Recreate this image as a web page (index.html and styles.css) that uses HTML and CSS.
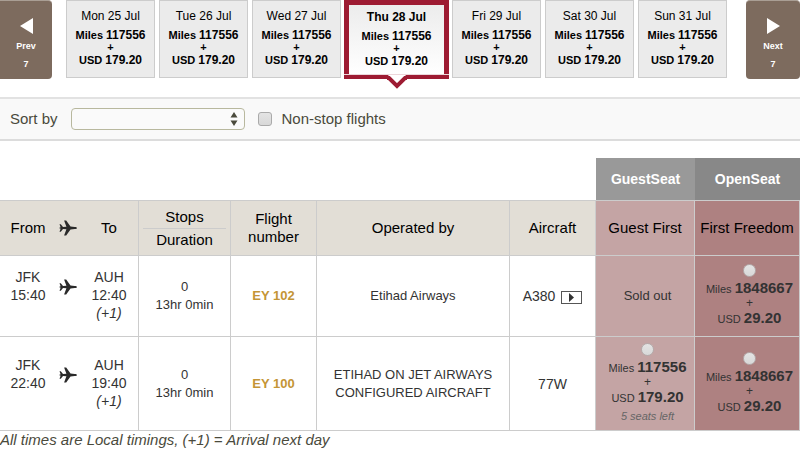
FILE: index.html
```html
<!DOCTYPE html>
<html lang="en">
<head>
<meta charset="utf-8">
<title>Select flights</title>
<meta name="viewport" content="width=device-width, initial-scale=1">
<link rel="stylesheet" href="styles.css">
</head>
<body>
<svg class="defs" aria-hidden="true">
  <symbol id="plane" viewBox="0 0 18 16">
    <path d="M18 8c0-.7-1-1-2.200-1.100L11.500 6.600 7.200.6H5.100L7.400 6.700 4 7 1.800 4.200H.5L1.600 7.300 0 8l1.600.7L.5 11.800h1.300L4 9l3.400.3L5.100 15.400h2.100l4.300-6 4.300-.3C17 9 18 8.700 18 8z"/>
  </symbol>
</svg>

<nav class="dates" aria-label="Departure date">
  <button type="button" class="pager pager-prev">
    <svg class="pager-arrow" viewBox="0 0 13 16" aria-hidden="true"><path d="M13 0v16L0 8z"/></svg>
    <span>Prev</span>
    <span>7</span>
  </button>
  <div class="days">
    <button type="button" class="day"><span class="day-name">Mon 25 Jul</span><span>Miles <b>117556</b></span><span class="plus">+</span><span>USD <b>179.20</b></span></button>
    <button type="button" class="day"><span class="day-name">Tue 26 Jul</span><span>Miles <b>117556</b></span><span class="plus">+</span><span>USD <b>179.20</b></span></button>
    <button type="button" class="day"><span class="day-name">Wed 27 Jul</span><span>Miles <b>117556</b></span><span class="plus">+</span><span>USD <b>179.20</b></span></button>
    <button type="button" class="day day-selected" aria-pressed="true"><span class="day-name">Thu 28 Jul</span><span>Miles <b>117556</b></span><span class="plus">+</span><span>USD <b>179.20</b></span>
      <svg class="pointer" viewBox="0 0 22 15" aria-hidden="true"><path class="pointer-fill" d="M2 0h18l-9 10z"/><path class="pointer-line" d="M1 3h2l8 8 8-8h2"/></svg>
    </button>
    <button type="button" class="day"><span class="day-name">Fri 29 Jul</span><span>Miles <b>117556</b></span><span class="plus">+</span><span>USD <b>179.20</b></span></button>
    <button type="button" class="day"><span class="day-name">Sat 30 Jul</span><span>Miles <b>117556</b></span><span class="plus">+</span><span>USD <b>179.20</b></span></button>
    <button type="button" class="day"><span class="day-name">Sun 31 Jul</span><span>Miles <b>117556</b></span><span class="plus">+</span><span>USD <b>179.20</b></span></button>
  </div>
  <button type="button" class="pager pager-next">
    <svg class="pager-arrow" viewBox="0 0 13 16" aria-hidden="true"><path d="M0 0v16l13-8z"/></svg>
    <span>Next</span>
    <span>7</span>
  </button>
</nav>

<form class="filters">
  <label for="sort">Sort by</label>
  <span class="select-box">
    <select id="sort"><option></option></select>
    <svg class="select-arrows" viewBox="0 0 8 14" aria-hidden="true"><path d="M4 0l3.500 5.500h-7zM4 14l3.500-5.500h-7z"/></svg>
  </span>
  <input type="checkbox" id="nonstop">
  <label for="nonstop">Non-stop flights</label>
</form>

<table class="flights">
  <colgroup>
    <col class="c-from"><col class="c-plane"><col class="c-to"><col class="c-stops"><col class="c-number"><col class="c-operator"><col class="c-aircraft"><col class="c-guest"><col class="c-open">
  </colgroup>
  <thead>
    <tr class="fare-groups">
      <td colspan="7"></td>
      <th class="group-guest">GuestSeat</th>
      <th class="group-open">OpenSeat</th>
    </tr>
    <tr class="headings">
      <th class="joined">From</th>
      <th class="joined"><svg class="plane" role="img" aria-label="to"><use href="#plane"/></svg></th>
      <th>To</th>
      <th class="stops"><div class="stops-top">Stops</div><div>Duration</div></th>
      <th>Flight number</th>
      <th>Operated by</th>
      <th>Aircraft</th>
      <th class="guest">Guest First</th>
      <th class="open">First Freedom</th>
    </tr>
  </thead>
  <tbody>
    <tr class="flight">
      <td class="joined place">JFK<br>15:40</td>
      <td class="joined place"><svg class="plane" role="img" aria-label="to"><use href="#plane"/></svg></td>
      <td class="place">AUH<br>12:40<br><i>(+1)</i></td>
      <td>0<br>13hr 0min</td>
      <td><a href="#ey102">EY 102</a></td>
      <td>Etihad Airways</td>
      <td class="aircraft">A380 <button type="button" class="video" aria-label="Play A380 video"><svg viewBox="0 0 19 11" aria-hidden="true"><path d="M7 1v9l5-4.500z"/></svg></button></td>
      <td class="guest sold-out">Sold out</td>
      <td class="open fare">
        <input type="radio" name="fare" id="f1"><label for="f1"><span>Miles <b>1848667</b></span><span class="fare-plus">+</span><span>USD <b>29.20</b></span></label>
      </td>
    </tr>
    <tr class="flight flight-last">
      <td class="joined place">JFK<br>22:40</td>
      <td class="joined place"><svg class="plane" role="img" aria-label="to"><use href="#plane"/></svg></td>
      <td class="place">AUH<br>19:40<br><i>(+1)</i></td>
      <td>0<br>13hr 0min</td>
      <td><a href="#ey100">EY 100</a></td>
      <td>ETIHAD ON JET AIRWAYS<br>CONFIGURED AIRCRAFT</td>
      <td class="aircraft">77W</td>
      <td class="guest fare">
        <input type="radio" name="fare" id="f2"><label for="f2"><span>Miles <b>117556</b></span><span class="fare-plus">+</span><span>USD <b>179.20</b></span></label>
        <div class="left">5 seats left</div>
      </td>
      <td class="open fare">
        <input type="radio" name="fare" id="f3"><label for="f3"><span>Miles <b>1848667</b></span><span class="fare-plus">+</span><span>USD <b>29.20</b></span></label>
      </td>
    </tr>
  </tbody>
</table>
<p class="note">All times are Local timings, (+1) = Arrival next day</p>
</body>
</html>
```
FILE: styles.css
```css
* {
  box-sizing: border-box;
}

body {
  margin: 0;
  background: #fff;
  color: #333;
  font-family: "Liberation Sans", Arial, sans-serif;
  font-size: 13px;
  line-height: 18px;
}

button,
select {
  font-family: inherit;
}

.defs {
  position: absolute;
  width: 0;
  height: 0;
}

/* Date strip */
.dates {
  display: flex;
  align-items: flex-start;
}

.pager {
  display: flex;
  flex: none;
  flex-direction: column;
  align-items: center;
  width: 52px;
  height: 79px;
  padding: 17px 0 0;
  border: 0;
  border-top: 1px solid #a99e94;
  border-radius: 0 4px 4px 0;
  background: #7d6b5e;
  color: #fff;
  font-size: 9px;
  font-weight: bold;
  line-height: 18px;
}

.pager-next {
  width: 54px;
  border-radius: 4px;
}

.pager-arrow {
  width: 13px;
  height: 16px;
  margin-bottom: 3px;
  fill: #fff;
}

.days {
  display: grid;
  flex: 1;
  grid-template-columns: 89fr 89fr 89fr 103fr 89fr 89fr 89fr;
  align-items: start;
  gap: 4px;
  margin: 0 19px 0 14px;
}

.day {
  display: flex;
  flex-direction: column;
  align-items: center;
  height: 78px;
  padding: 7px 0 0;
  border: 1px solid #ccc;
  background: #ebebeb;
  color: #000;
  font-size: 11px;
  font-weight: bold;
  line-height: 14px;
}

.day b {
  font-size: 12px;
}

.day-name {
  margin-bottom: 4px;
  font-size: 12px;
  font-weight: normal;
  line-height: 16px;
}

.day .plus {
  line-height: 11px;
}

.day-selected {
  position: relative;
  height: 79px;
  margin: 0 -1px;
  padding-top: 4px;
  border: 5px solid #9d1b32;
  border-bottom-width: 4px;
  background: linear-gradient(#ececec, #fff);
}

.day-selected::after {
  position: absolute;
  right: -5px;
  bottom: 0;
  left: -5px;
  height: 1px;
  background: #ecd6da;
  content: "";
}

.day-selected .day-name {
  font-weight: bold;
}

.pointer {
  position: absolute;
  top: 100%;
  left: 50%;
  width: 22px;
  height: 15px;
  margin-left: -11px;
}

.pointer-fill {
  fill: #fff;
}

.pointer-line {
  fill: none;
  stroke: #9d1b32;
  stroke-width: 4;
}

/* Sorting and filtering */
.filters {
  display: flex;
  align-items: center;
  height: 44px;
  margin-top: 18px;
  padding-left: 10px;
  border-top: 2px solid #e2e2e2;
  border-bottom: 2px solid #dcdcdc;
  background: #f9f9f9;
  color: #4a4a3c;
  font-size: 15px;
}

.select-box {
  position: relative;
  display: flex;
  margin: 0 13px;
}

select {
  width: 174px;
  height: 22px;
  border: 1px solid #b8b89e;
  border-radius: 4px;
  background: #fafafa;
  appearance: none;
}

.select-arrows {
  position: absolute;
  top: 4px;
  right: 7px;
  width: 8px;
  height: 14px;
  fill: #4a4a3c;
}

input {
  appearance: none;
  margin: 0;
  border: 1px solid #aaa;
  background: linear-gradient(#e4e4e4, #d8d8d8);
}

input[type="checkbox"] {
  width: 14px;
  height: 14px;
  margin-right: 10px;
  border-radius: 3px;
}

input[type="radio"] {
  display: block;
  width: 13px;
  height: 13px;
  margin: 0 auto 2px;
  border-color: #b5acac;
  border-radius: 50%;
}

/* Flight list */
.flights {
  width: 100%;
  margin-top: 17px;
  border-spacing: 0;
  table-layout: fixed;
}

.c-from { width: 7%; }
.c-plane { width: 3%; }
.c-to { width: 7.375%; }
.c-stops { width: 11.500%; }
.c-number { width: 10.750%; }
.c-operator { width: 24.125%; }
.c-aircraft { width: 10.750%; }
.c-guest { width: 12.375%; }
.c-open { width: 13.125%; }

th,
td {
  padding: 0;
  border-right: 1px solid #ccc;
  border-bottom: 1px solid #ccc;
  text-align: center;
}

th {
  font-weight: normal;
}

.joined {
  border-right: 0;
}

.fare-groups {
  height: 43px;
}

.fare-groups td,
.fare-groups th {
  border-right: 0;
}

.fare-groups th {
  color: #fff;
  font-size: 14px;
  font-weight: bold;
}

.group-guest {
  background: #999;
}

.group-open {
  background: #888;
}

.headings {
  height: 55px;
  background: #e2ded6;
  color: #000;
  font-size: 15px;
}

.stops {
  padding: 0 4px;
}

.stops-top {
  margin-bottom: 2px;
  padding-bottom: 2px;
  border-bottom: 1px solid #ccc;
}

.guest {
  background: #c4a4a4;
}

.open {
  background: #ae8181;
}

.flight {
  height: 81px;
}

.flight-last {
  height: 94px;
}

.place,
.aircraft {
  font-size: 14px;
}

.place {
  padding-top: 12px;
  vertical-align: top;
}

.flight-last .place {
  padding-top: 19px;
}

.plane {
  display: block;
  width: 18px;
  height: 16px;
  margin: 0 auto;
  fill: #2a2a2a;
}

.flight .plane {
  margin-top: 11px;
}

a {
  color: #c49536;
  font-weight: bold;
  text-decoration: none;
}

.video {
  width: 21px;
  height: 13px;
  margin-left: 2px;
  padding: 0;
  border: 1px solid #555;
  background: #fff;
  vertical-align: -2px;
}

.video svg {
  display: block;
  width: 100%;
  height: 100%;
  fill: #333;
}

.fare {
  padding-left: 5px;
}

.sold-out {
  padding-left: 5px;
}

.fare label {
  display: flex;
  flex-direction: column;
  font-size: 11px;
  line-height: 17px;
}

.fare b {
  font-size: 15px;
}

.fare .fare-plus {
  font-size: 12px;
  line-height: 11px;
}

.left {
  color: #666;
  font-size: 11px;
  font-style: italic;
}

.note {
  margin: 0;
  color: #4a4a3c;
  font-size: 15px;
  font-style: italic;
}
```
